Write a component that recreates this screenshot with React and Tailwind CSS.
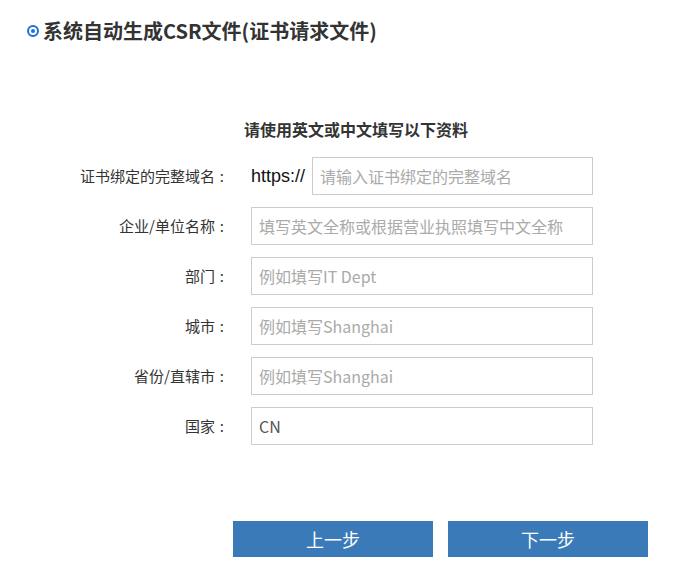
import React from 'react';

const rows = [
  { label: '证书绑定的完整域名', placeholder: '请输入证书绑定的完整域名', prefix: 'https://' },
  { label: '企业/单位名称', placeholder: '填写英文全称或根据营业执照填写中文全称' },
  { label: '部门', placeholder: '例如填写IT Dept' },
  { label: '城市', placeholder: '例如填写Shanghai' },
  { label: '省份/直辖市', placeholder: '例如填写Shanghai' },
  { label: '国家', value: 'CN' },
];

const App = () => {
  return (
    <div className="w-[697px] h-[579px] bg-white text-[#333] font-['Noto_Sans_CJK_SC',sans-serif]">
      {/* Header */}
      <div className="flex items-center pt-[17px] pl-[27px] h-[45px]">
        <span className="w-[12px] h-[12px] rounded-full border-2 border-[#1e6fd9] flex items-center justify-center">
          <span className="w-[4px] h-[4px] rounded-full bg-[#1e6fd9]" />
        </span>
        <h1 className="ml-[4px] text-[20px] leading-[28px] font-bold text-[#333]">系统自动生成CSR文件(证书请求文件)</h1>
      </div>

      {/* Subheading */}
      <p className="mt-[72px] pl-[244px] text-[16px] leading-[24px] font-bold text-[#333]">请使用英文或中文填写以下资料</p>

      {/* Form */}
      <div className="mt-[16px] flex flex-col gap-[12px]">
        {rows.map((row) => (
          <div key={row.label} className="flex items-center h-[38px]">
            <label className="w-[228px] flex justify-end text-[15px] leading-[20px] text-[#333]">
              <span>{row.label}</span>
              <span className="w-[13px] text-right pr-[4px]">:</span>
            </label>
            <div className="ml-[23px] flex items-center">
              {row.prefix && (
                <span className="w-[61px] text-[18px] font-['Liberation_Sans',sans-serif] text-[#111]">{row.prefix}</span>
              )}
              <input
                readOnly
                defaultValue={row.value}
                placeholder={row.placeholder}
                className={`${row.prefix ? 'w-[281px]' : 'w-[342px]'} h-[38px] border border-[#ccc] px-[7px] text-[16px] text-[#555] placeholder:text-[#aaa] outline-none bg-white`}
              />
            </div>
          </div>
        ))}
      </div>

      {/* Actions */}
      <div className="mt-[76px] pl-[233px] flex gap-[15px]">
        <button className="w-[200px] h-[36px] bg-[#3a7ab8] text-white text-[18px] leading-[36px]">上一步</button>
        <button className="w-[200px] h-[36px] bg-[#3a7ab8] text-white text-[18px] leading-[36px]">下一步</button>
      </div>
    </div>
  );
};

export default App;
